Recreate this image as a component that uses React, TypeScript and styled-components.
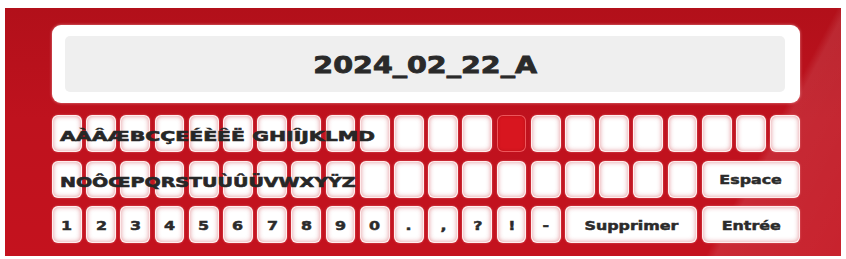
import React from "react";
import styled, { createGlobalStyle } from "styled-components";

const Global = createGlobalStyle`
  html, body { margin: 0; padding: 0; background: #ffffff; }
  body { font-family: "DejaVu Sans", "Liberation Sans", sans-serif; }
  * { box-sizing: border-box; }
`;

const Page = styled.div`
  width: 846px;
  height: 259px;
  padding: 8px 5px 3px 5px;
  background: #ffffff;
`;

const Panel = styled.div`
  height: 248px;
  padding: 17px 41px 0 47px;
  display: flex;
  flex-direction: column;
  gap: 12px;
  background:
    linear-gradient(118deg, rgba(255,255,255,0) 0%, rgba(255,255,255,0) 86%, rgba(255,255,255,0.10) 87%, rgba(255,255,255,0.07) 100%),
    linear-gradient(180deg, #b2101a 0%, #bf121e 45%, #c4121e 100%);
`;

const Display = styled.div`
  height: 78px;
  background: #ffffff;
  border-radius: 9px;
  padding: 11px 15px 11px 13px;
  box-shadow: 0 0 3px rgba(255, 220, 220, 0.6);
`;

const Screen = styled.div`
  height: 100%;
  background: #efefef;
  border-radius: 5px;
  display: flex;
  align-items: center;
  justify-content: center;
`;

const ScreenText = styled.span`
  display: inline-block;
  font-size: 23px;
  font-weight: 700;
  color: #2a2a2a;
  -webkit-text-stroke: 0.8px #2a2a2a;
  transform: scaleX(1.24);
  margin-top: 2px;
`;

const Grid = styled.div`
  display: grid;
  grid-template-columns: repeat(22, minmax(0, 1fr));
  grid-template-rows: repeat(3, 37px);
  column-gap: 4.4px;
  row-gap: 8.5px;
`;

const Key = styled.div<{ $active?: boolean; $span?: number; $row: number; $col: number }>`
  grid-row: ${(p) => p.$row};
  grid-column: ${(p) => p.$col} / span ${(p) => p.$span ?? 1};
  border-radius: 6px;
  background: ${(p) => (p.$active ? "#d8161f" : "#ffffff")};
  border: 1px solid ${(p) => (p.$active ? "rgba(255,140,140,0.55)" : "rgba(255,235,235,0.9)")};
  box-shadow: ${(p) =>
    p.$active
      ? "inset 0 0 3px rgba(120,0,0,0.3)"
      : "inset 0 0 5px rgba(200, 40, 50, 0.5), 0 0 2px rgba(255, 190, 190, 0.5)"};
  display: flex;
  align-items: center;
  justify-content: center;
  overflow: visible;
`;

const Label = styled.span`
  display: inline-block;
  font-size: 13px;
  font-weight: 700;
  color: #2b2b2b;
  -webkit-text-stroke: 0.5px #2b2b2b;
  transform: scaleX(1.22);
  white-space: nowrap;
  margin-top: 1px;
`;

const Overlay = styled.div<{ $row: number; $scale: number }>`
  grid-row: ${(p) => p.$row};
  grid-column: 1 / span 14;
  z-index: 1;
  display: flex;
  align-items: center;
  padding-left: 8px;
  pointer-events: none;

  span {
    display: inline-block;
    font-size: 14px;
    font-weight: 700;
    color: #272727;
    -webkit-text-stroke: 0.6px #272727;
    white-space: pre;
    transform: scaleX(${(p) => p.$scale});
    transform-origin: left center;
    margin-top: ${(p) => (p.$row === 1 ? 4 : 5)}px;
  }
`;

const row1Count = 22;
const activeIndex = 13;
const row2Count = 19;
const row3Keys = ["1", "2", "3", "4", "5", "6", "7", "8", "9", "0", ".", ",", "?", "!", "-"];

export default function App() {
  return (
    <>
      <Global />
      <Page>
        <Panel>
          <Display>
            <Screen>
              <ScreenText>2024_02_22_A</ScreenText>
            </Screen>
          </Display>
          <Grid>
            {Array.from({ length: row1Count }, (_, i) => (
              <Key key={`r1-${i}`} $row={1} $col={i + 1} $active={i === activeIndex} />
            ))}
            {Array.from({ length: row2Count }, (_, i) => (
              <Key key={`r2-${i}`} $row={2} $col={i + 1} />
            ))}
            <Key $row={2} $col={20} $span={3}>
              <Label>Espace</Label>
            </Key>
            {row3Keys.map((k, i) => (
              <Key key={`r3-${k}`} $row={3} $col={i + 1}>
                <Label>{k}</Label>
              </Key>
            ))}
            <Key $row={3} $col={16} $span={4}>
              <Label>Supprimer</Label>
            </Key>
            <Key $row={3} $col={20} $span={3}>
              <Label>Entrée</Label>
            </Key>
            <Overlay $row={1} $scale={1.46}>
              <span>AÀÂÆBCÇEÉÈÊË GHIÎJKLMD</span>
            </Overlay>
            <Overlay $row={2} $scale={1.36}>
              <span>NOÔŒPQRSTUÙÛÜVWXYŸZ</span>
            </Overlay>
          </Grid>
        </Panel>
      </Page>
    </>
  );
}
